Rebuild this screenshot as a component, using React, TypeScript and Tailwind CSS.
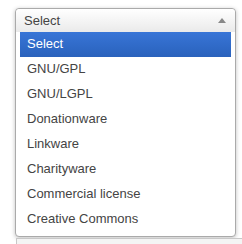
const options = [
  "Select",
  "GNU/GPL",
  "GNU/LGPL",
  "Donationware",
  "Linkware",
  "Charityware",
  "Commercial license",
  "Creative Commons",
];

export default function App() {
  return (
    <div
      className="w-[242px] h-[244px] overflow-hidden bg-white pt-[8px] pl-[15px]"
      style={{ fontFamily: '"Liberation Sans", Arial, sans-serif' }}
    >
      <div className="w-[221px] rounded-[4px] border border-[#aaa] bg-white shadow-[0_1px_4px_rgba(0,0,0,0.25)]">
        <div className="flex h-[23px] items-center justify-between rounded-t-[4px] bg-gradient-to-b from-white to-[#eaeaea] pl-[8px] pr-[9px] text-[13px] text-[#444]">
          <span>Select</span>
          <svg width="8" height="5" viewBox="0 0 8 5" className="mt-[-1px]">
            <polygon points="4,0 8,5 0,5" fill="#888" />
          </svg>
        </div>
        <ul className="mb-[4px] px-[4px]">
          {options.map((o, i) => (
            <li
              key={o}
              className={
                i === 0
                  ? "h-[25px] bg-gradient-to-b from-[#3875d7] to-[#2a62bc] pl-[7px] pt-[3px] text-[13px] leading-[18px] text-white"
                  : "h-[25px] pl-[7px] pt-[3px] text-[13px] leading-[18px] text-[#444]"
              }
            >
              {o}
            </li>
          ))}
        </ul>
      </div>
      <div className="mt-[1px] ml-[1px] h-[20px] border-t border-l border-[#c8c8c8] bg-[#f4f4f4]" />
    </div>
  );
}
